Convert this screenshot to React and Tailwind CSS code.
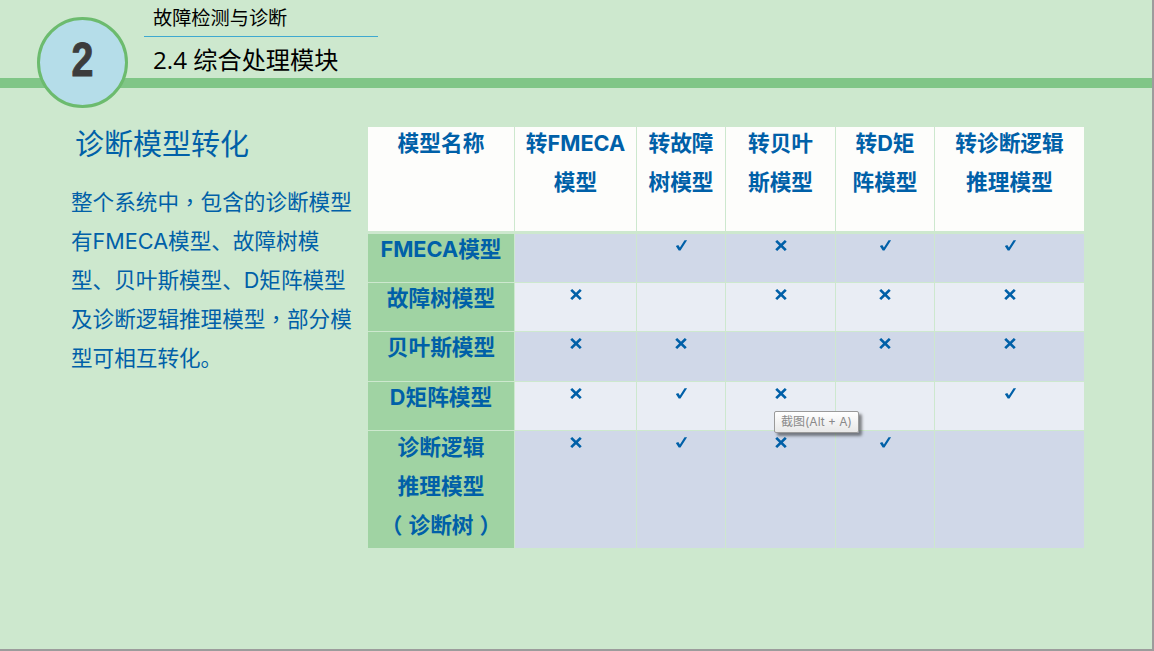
const cols = 'grid grid-cols-[146px_121px_88px_109px_98px_149px] gap-x-px'

const head = [['模型名称'], ['转FMECA', '模型'], ['转故障', '树模型'], ['转贝叶', '斯模型'], ['转D矩', '阵模型'], ['转诊断逻辑', '推理模型']]

const rows = [
  { name: ['FMECA模型'], marks: ['', 'y', 'n', 'y', 'y'], h: 'h-[48px]', bg: 'bg-[#d0d8e8]' },
  { name: ['故障树模型'], marks: ['n', '', 'n', 'n', 'n'], h: 'h-[48px]', bg: 'bg-[#e9edf4]' },
  { name: ['贝叶斯模型'], marks: ['n', 'n', '', 'n', 'n'], h: 'h-[49px]', bg: 'bg-[#d0d8e8]' },
  { name: ['D矩阵模型'], marks: ['n', 'y', 'n', '', 'y'], h: 'h-[48px]', bg: 'bg-[#e9edf4]' },
  { name: ['诊断逻辑', '推理模型'], marks: ['n', 'y', 'n', 'y', ''], h: 'h-[117px]', bg: 'bg-[#d0d8e8]', tree: true },
]

const Mark = ({ type }) => {
  if (type === 'y') {
    return (
      <svg width="12" height="11" viewBox="0 0 12 11" className="mx-auto mt-[6px] translate-x-[0.5px]">
        <path d="M0.3 6 L2.8 5 L4.4 7.4 L9 0.2 L11.6 0.2 L5 10.6 L3.2 10.6 Z" fill="currentColor" />
      </svg>
    )
  }
  if (type === 'n') {
    return (
      <svg width="12" height="11" viewBox="0 0 12 11" className="mx-auto mt-[6px]">
        <path d="M1.2 0.9 L10.8 10.1 M10.8 0.9 L1.2 10.1" stroke="currentColor" strokeWidth="2.7" fill="none" />
      </svg>
    )
  }
  return null
}

export default function App() {
  return (
    <div className="h-[651px] w-[1154px] overflow-hidden border-r-2 border-b-2 border-[#9c9c9c] bg-[#cde8ce] font-['Inter','Noto_Sans_CJK_SC',sans-serif] text-[#0060a8]">
      {/* Title bar */}
      <div className="relative h-[88px] border-b-[10px] border-[#80c687]">
        <div className="absolute left-[37px] top-[17px] z-10 flex h-[91px] w-[91px] items-center justify-center rounded-full border-[3px] border-[#6cbb6e] bg-[#b5dde9] pb-[5px]">
          <span className="scale-x-[0.82] font-['Liberation_Sans',sans-serif] text-[48px] font-bold leading-none text-[#3c3c3c] [-webkit-text-stroke:1px_#3c3c3c]">2</span>
        </div>
        <div className="ml-[144px] w-[234px] text-black">
          <div className="h-[37px] border-b border-[#3fa9d0] pl-[9px] pt-[4px] text-[19.2px] leading-[28px]">故障检测与诊断</div>
          <div className="pl-[9px] pt-[6px] font-['Open_Sans','Noto_Sans_CJK_SC',sans-serif] text-[24.2px] leading-[34px]">2.4 综合处理模块</div>
        </div>
      </div>

      <div className="flex">
        {/* Left text */}
        <div className="ml-[71px] w-[297px]">
          <h1 className="ml-[4px] mt-[37px] text-[29px] font-normal leading-[40px]">诊断模型转化</h1>
          <p className="mt-[18px] text-[21.6px] leading-[39px]">
            整个系统中<span className="font-['Noto_Sans_CJK_TC'] leading-[0]">，</span>包含的诊断模型<br />
            有FMECA模型、故障树模<br />
            型、贝叶斯模型、D矩阵模型<br />
            及诊断逻辑推理模型<span className="font-['Noto_Sans_CJK_TC'] leading-[0]">，</span>部分模<br />
            型可相互转化。
          </p>
        </div>

        {/* Table */}
        <div className="relative mt-[39px] w-[716px] font-bold">
          <div className={`${cols} mb-[3px] h-[104px]`}>
            {head.map((lines, i) => (
              <div key={i} className="bg-[#fdfdfb] text-center text-[21.7px] leading-[39px]">
                <div className="-mt-[3px]">
                  {lines.map((l) => <div key={l}>{l}</div>)}
                </div>
              </div>
            ))}
          </div>
          <div className="flex flex-col gap-y-px">
            {rows.map((row, r) => (
              <div key={r} className={`${cols} ${row.h}`}>
                <div className="bg-[#a0d3a3] text-center text-[21.7px] leading-[30px]">
                  {row.tree ? (
                    <div className="-mt-[3px] leading-[39px]">
                      {row.name.map((l) => <div key={l}>{l}</div>)}
                      <div>
                        <span className="inline-block -translate-x-[6px]">（</span>诊断树<span className="inline-block translate-x-[6px]">）</span>
                      </div>
                    </div>
                  ) : row.name[0]}
                </div>
                {row.marks.map((m, i) => (
                  <div key={i} className={row.bg}>
                    <Mark type={m} />
                  </div>
                ))}
              </div>
            ))}
          </div>
          {/* Screenshot tooltip */}
          <div className="absolute left-[406px] top-[284px] flex h-[22px] w-[85px] items-center justify-center rounded-[2px] border border-[#9a9a9a] bg-gradient-to-b from-white to-[#e8e8e8] text-[12px] font-normal text-[#8a8a8a] shadow-[3px_3px_3px_rgba(0,0,0,0.45)]">
            截图(Alt + A)
          </div>
        </div>
      </div>
    </div>
  )
}
